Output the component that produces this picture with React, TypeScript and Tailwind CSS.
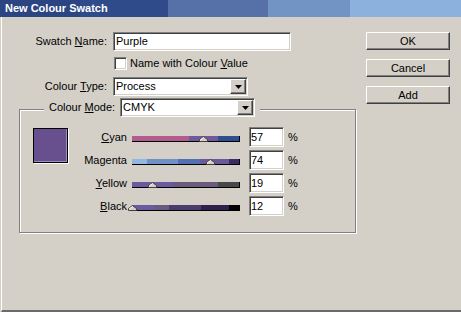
import React from "react";

const sunken =
    "border border-t-[#808080] border-l-[#808080] border-b-white border-r-white shadow-[inset_1px_1px_0_#404040,inset_-1px_-1px_0_#d4d0c8] bg-white";
const raised =
    "border border-t-white border-l-white border-b-[#404040] border-r-[#404040] shadow-[inset_-1px_-1px_0_#808080] bg-[#d4d0c8]";

const sliders = [
    {
        label: "Cyan",
        at: 0,
        value: "57",
        track: "bg-[linear-gradient(to_right,#b35a8e_0px,#b35a8e_57px,#705a9c_57px,#705a9c_86px,#2f4e90_86px)]",
        thumb: "left-[67px]",
    },
    {
        label: "Magenta",
        at: 2,
        value: "74",
        track: "bg-[linear-gradient(to_right,#90b8e0_0px,#90b8e0_15px,#7090c8_15px,#7090c8_46px,#5470b0_46px,#5470b0_68px,#6a5898_68px,#6a5898_97px,#3c2c62_97px)]",
        thumb: "left-[74px]",
    },
    {
        label: "Yellow",
        at: 0,
        value: "19",
        track: "bg-[linear-gradient(to_right,#6a5aa0_0px,#6a5aa0_41px,#6a5a7c_41px,#6a5a7c_86px,#484848_86px)]",
        thumb: "left-[16px]",
    },
    {
        label: "Black",
        at: 0,
        value: "12",
        track: "bg-[linear-gradient(to_right,#6a5aa0_0px,#6a5aa0_22px,#6a5a80_22px,#6a5a80_37px,#4a3c6e_37px,#4a3c6e_69px,#30204c_69px,#30204c_97px,#000_97px)]",
        thumb: "left-[-4px]",
    },
];

function Mnemonic({ text, at }: { text: string; at: number }) {
    return (
        <>
            {text.slice(0, at)}
            <span className="underline underline-offset-[1px]">{text[at]}</span>
            {text.slice(at + 1)}
        </>
    );
}

function Select({ value, width }: { value: string; width: string }) {
    return (
        <div className={`${sunken} ${width} h-[19px] flex items-center`}>
            <span className="flex-1 pl-[2px]">{value}</span>
            <div className={`${raised} w-[16px] h-[15px] mr-[1px] flex items-center justify-center`}>
                <svg width="7" height="4" viewBox="0 0 7 4">
                    <polygon points="0,0 7,0 3.5,4" fill="#000" />
                </svg>
            </div>
        </div>
    );
}

function Thumb({ pos }: { pos: string }) {
    return (
        <svg className={`absolute bottom-[-1px] ${pos}`} width="9" height="6" viewBox="0 0 9 6">
            <polygon points="0.5,5.5 0.5,3.5 4.5,0.5 8.5,3.5 8.5,5.5" fill="#d4d0c8" stroke="#404040" />
            <polyline points="1.5,4.5 1.5,3.8 4.5,1.6" fill="none" stroke="#fff" />
        </svg>
    );
}

export default function App() {
    return (
        <div className="w-[461px] h-[312px] bg-[#d4d0c8] flex flex-col overflow-hidden font-['Liberation_Sans',Arial,sans-serif] text-[11px] leading-none text-black">
            {/* Title bar */}
            <div className="h-[17px] shrink-0 flex items-center pl-[5px] text-white font-bold text-[11px] bg-[linear-gradient(to_right,#2b4482_0px,#2b4482_80px,#304b8a_80px,#304b8a_168px,#5571a8_168px,#5571a8_268px,#7294c4_268px,#7294c4_350px,#8cb1dc_350px)]">
                New Colour Swatch
            </div>

            <div className="flex-1 flex ml-[1px] border-l border-l-white border-b-2 border-b-[#6a6a6a]">
                {/* Main column */}
                <div className="w-[364px] flex flex-col">
                    <div className="mt-[15px] h-[19px] flex items-center">
                        <span className="w-[105px] text-right">
                            Swatch <Mnemonic text="Name" at={0} />:
                        </span>
                        <div className={`${sunken} ml-[6px] w-[178px] h-[19px] flex items-center pl-[2px]`}>Purple</div>
                    </div>

                    <div className="mt-[6px] h-[13px] flex items-center pl-[112px]">
                        <div className={`${sunken} w-[13px] h-[13px]`} />
                        <span className="ml-[3px]">
                            Name with Colour <Mnemonic text="Value" at={0} />
                        </span>
                    </div>

                    <div className="mt-[7px] h-[19px] flex items-center">
                        <span className="w-[105px] text-right">
                            Colour <Mnemonic text="Type" at={0} />:
                        </span>
                        <div className="ml-[6px]">
                            <Select value="Process" width="w-[135px]" />
                        </div>
                    </div>

                    {/* Colour mode group */}
                    <fieldset className="mt-[2px] ml-[17px] w-[337px] border border-[#808080] shadow-[1px_1px_0_#fff,inset_1px_1px_0_#fff] pl-[13px] pt-[7px] pb-[16px]">
                        <legend className="ml-[11px] px-[5px] pb-[3px] bg-[#d4d0c8]">
                            <div className="flex items-center gap-[5px]">
                                <span>
                                    Colour <Mnemonic text="Mode" at={0} />:
                                </span>
                                <Select value="CMYK" width="w-[135px]" />
                            </div>
                        </legend>

                        <div className="flex items-start">
                            <div className="mt-[1px] w-[35px] h-[35px] bg-[#68508f] border border-black shadow-[1px_1px_0_#fff,inset_-1px_-1px_0_#9d8fbd]" />
                            <div className="flex flex-col gap-[3px]">
                                {sliders.map((s) => (
                                    <div key={s.label} className="h-[20px] flex items-center">
                                        <span className="w-[59px] text-right">
                                            <Mnemonic text={s.label} at={s.at} />
                                        </span>
                                        <div className={`relative ml-[5px] mt-[4px] w-[108px] h-[6px] border-b border-b-black border-r border-r-black ${s.track}`}>
                                            <Thumb pos={s.thumb} />
                                        </div>
                                        <div className={`${sunken} ml-[9px] w-[35px] h-[20px] flex items-center pl-[1px]`}>
                                            {s.value}
                                        </div>
                                        <span className="ml-[4px]">%</span>
                                    </div>
                                ))}
                            </div>
                        </div>
                    </fieldset>
                </div>

                {/* Buttons */}
                <div className="w-[84px] flex flex-col gap-[9px] mt-[15px]">
                    {["OK", "Cancel", "Add"].map((b) => (
                        <button key={b} className={`${raised} h-[18px] w-full flex items-center justify-center`}>
                            {b}
                        </button>
                    ))}
                </div>
            </div>
        </div>
    );
}
